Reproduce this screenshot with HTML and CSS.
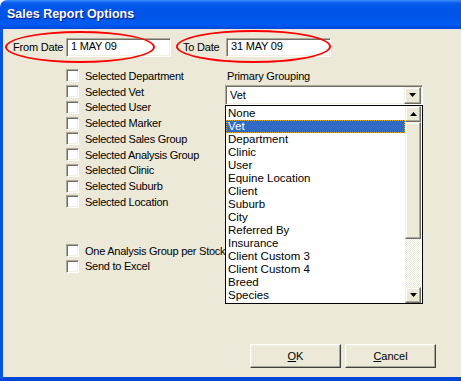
FILE: index.html
```html
<!DOCTYPE html>
<html lang="en">
<head>
    <meta charset="UTF-8">
    <title>Sales Report Options</title>
    <link rel="stylesheet" href="styles.css">
</head>
<body>

    <div class="window">
        <div class="titlebar"><span class="title">Sales Report Options</span></div>

        <div class="frame">
            <div class="dates">
                <label class="date-label from">From Date</label>
                <div class="textbox">1 MAY 09</div>
                <label class="date-label to">To Date</label>
                <div class="textbox">31 MAY 09</div>
                <!-- red rings drawn over the fields -->
                <span class="ring ring-from"></span>
                <span class="ring ring-to"></span>
            </div>

            <div class="options">
                <div class="checks">
                    <div class="check"><span class="box"></span>Selected Department</div>
                    <div class="check"><span class="box"></span>Selected Vet</div>
                    <div class="check"><span class="box"></span>Selected User</div>
                    <div class="check"><span class="box"></span>Selected Marker</div>
                    <div class="check"><span class="box"></span>Selected Sales Group</div>
                    <div class="check"><span class="box"></span>Selected Analysis Group</div>
                    <div class="check"><span class="box"></span>Selected Clinic</div>
                    <div class="check"><span class="box"></span>Selected Suburb</div>
                    <div class="check"><span class="box"></span>Selected Location</div>
                    <div class="spacer"></div>
                    <div class="check"><span class="box"></span>One Analysis Group per Stock</div>
                    <div class="check"><span class="box"></span>Send to Excel</div>
                </div>

                <div class="grouping">
                    <div class="group-label">Primary Grouping</div>
                    <div class="combo">
                        <span class="combo-value">Vet</span>
                        <span class="sb-btn combo-btn">
                            <svg width="7" height="4" viewBox="0 0 7 4"><path d="M0 0h7L3.5 4z" fill="#000"/></svg>
                        </span>

                        <div class="dropdown">
                            <ul class="items">
                                <li>None</li>
                                <li class="selected">Vet</li>
                                <li>Department</li>
                                <li>Clinic</li>
                                <li>User</li>
                                <li>Equine Location</li>
                                <li>Client</li>
                                <li>Suburb</li>
                                <li>City</li>
                                <li>Referred By</li>
                                <li>Insurance</li>
                                <li>Client Custom 3</li>
                                <li>Client Custom 4</li>
                                <li>Breed</li>
                                <li>Species</li>
                            </ul>
                            <div class="scrollbar">
                                <span class="sb-btn">
                                    <svg width="7" height="4" viewBox="0 0 7 4"><path d="M0 4h7L3.5 0z" fill="#000"/></svg>
                                </span>
                                <span class="thumb"></span>
                                <span class="track"></span>
                                <span class="sb-btn">
                                    <svg width="7" height="4" viewBox="0 0 7 4"><path d="M0 0h7L3.5 4z" fill="#000"/></svg>
                                </span>
                            </div>
                        </div>
                    </div>
                </div>
            </div>

            <div class="actions">
                <button><u>O</u>K</button>
                <button><u>C</u>ancel</button>
            </div>
        </div>
    </div>

</body>
</html>
```

FILE: styles.css
```css
body {
    margin: 0;
    background-color: #fff;
    font-family: "Liberation Sans", Arial, sans-serif;
    font-size: 11px;
    color: #000;
}
.window {
    width: 461px;
    height: 381px;
    display: flex;
    flex-direction: column;
    border-top-left-radius: 7px;
    overflow: hidden;
}
.titlebar {
    height: 29px;
    flex: none;
    display: flex;
    align-items: center;
    padding-left: 7px;
    background: linear-gradient(to bottom, #3d8dfb 0, #0a5cef 3px, #0055ea 8px, #0054e6 18px, #005cf3 24px, #0049dc 29px);
}
.title {
    color: #fff;
    font-weight: bold;
    font-size: 12.5px;
    text-shadow: 1px 1px #0a1883;
    padding-bottom: 1px;
}
.frame {
    flex: 1;
    display: flex;
    flex-direction: column;
    background-color: #ece9d8;
    border-left: 3px solid #0055e5;
    border-bottom: 4px solid #0046d6;
}
.dates {
    position: relative;
    display: flex;
    align-items: center;
    padding: 9px 0 0 10px;
    letter-spacing: -0.2px;
}
.date-label {
    line-height: 19px;
}
.date-label.from {
    width: 53px;
}
.date-label.to {
    width: 43px;
    margin-left: 12px;
}
.textbox {
    box-sizing: border-box;
    width: 105px;
    height: 19px;
    padding: 0 4px;
    line-height: 15px;
    background-color: #fff;
    border: 1px solid;
    border-color: #aca899 #fff #fff #aca899;
    box-shadow: inset 1px 1px #716f64, inset -1px -1px #f1efe2;
}
.ring {
    position: absolute;
    box-sizing: border-box;
    border: 2px solid #f00;
    border-radius: 50%;
}
.ring-from {
    left: 2px;
    top: 2px;
    width: 150px;
    height: 32px;
}
.ring-to {
    left: 173px;
    top: 1px;
    width: 155px;
    height: 33px;
}
.options {
    display: flex;
    margin-top: 11px;
    padding-left: 63px;
}
.checks {
    width: 159px;
    flex: none;
    white-space: nowrap;
    letter-spacing: -0.25px;
}
.check {
    height: 15.75px;
    display: flex;
    align-items: center;
}
.box {
    flex: none;
    box-sizing: border-box;
    width: 13px;
    height: 13px;
    margin-right: 6px;
    background-color: #fff;
    border: 1px solid;
    border-color: #aca899 #fff #fff #aca899;
    box-shadow: inset 1px 1px #716f64, inset -1px -1px #f1efe2;
}
.spacer {
    height: 33px;
}
.grouping {
    width: 198px;
}
.group-label {
    height: 13px;
    line-height: 13px;
    padding: 2px 0 0 2px;
    letter-spacing: -0.2px;
}
.combo {
    position: relative;
    box-sizing: border-box;
    height: 20px;
    margin-top: 2px;
    display: flex;
    align-items: center;
    justify-content: space-between;
    background-color: #fff;
    border: 1px solid;
    border-color: #aca899 #fff #fff #aca899;
    box-shadow: inset 1px 1px #716f64, inset -1px -1px #f1efe2;
    padding: 1px 1px 1px 4px;
}
.sb-btn {
    flex: none;
    box-sizing: border-box;
    width: 16px;
    height: 16px;
    display: flex;
    align-items: center;
    justify-content: center;
    background-color: #ece9d8;
    border: 1px solid;
    border-color: #f1efe2 #716f64 #716f64 #f1efe2;
    box-shadow: inset -1px -1px #aca899, inset 1px 1px #fff;
}
.combo-btn {
    width: 17px;
    height: 17px;
}
.dropdown {
    position: absolute;
    z-index: 2;
    left: -1px;
    top: 19px;
    box-sizing: border-box;
    width: 198px;
    height: 199px;
    display: flex;
    background-color: #fff;
    border: 1px solid #000;
}
.items {
    flex: 1;
    list-style: none;
    margin: 0;
    padding: 1px 0 0 0;
    font-size: 11.5px;
}
.items li {
    height: 13px;
    line-height: 13px;
    padding-left: 2px;
}
.items li.selected {
    background-color: #316ac5;
    color: #fff;
    outline: 1px dotted #e0b000;
    outline-offset: -1px;
}
.scrollbar {
    width: 16px;
    display: flex;
    flex-direction: column;
    margin-right: 1px;
}
.thumb {
    height: 117px;
    box-sizing: border-box;
    background-color: #ece9d8;
    border: 1px solid;
    border-color: #f1efe2 #716f64 #716f64 #f1efe2;
    box-shadow: inset -1px -1px #aca899, inset 1px 1px #fff;
}
.track {
    flex: 1;
    background: repeating-conic-gradient(#fff 0 25%, #ece9d8 0 50%) 0 0 / 2px 2px;
}
.actions {
    margin-top: auto;
    display: flex;
    justify-content: flex-end;
    gap: 4px;
    padding: 0 25px 9px 0;
}
button {
    box-sizing: border-box;
    width: 91px;
    height: 24px;
    font-family: "Liberation Sans", Arial, sans-serif;
    font-size: 11px;
    color: #000;
    background-color: #ece9d8;
    border: 1px solid;
    border-color: #fff #404040 #404040 #fff;
    box-shadow: inset -1px -1px #aca899, inset 1px 1px #f1efe2;
    padding: 0;
}
```
